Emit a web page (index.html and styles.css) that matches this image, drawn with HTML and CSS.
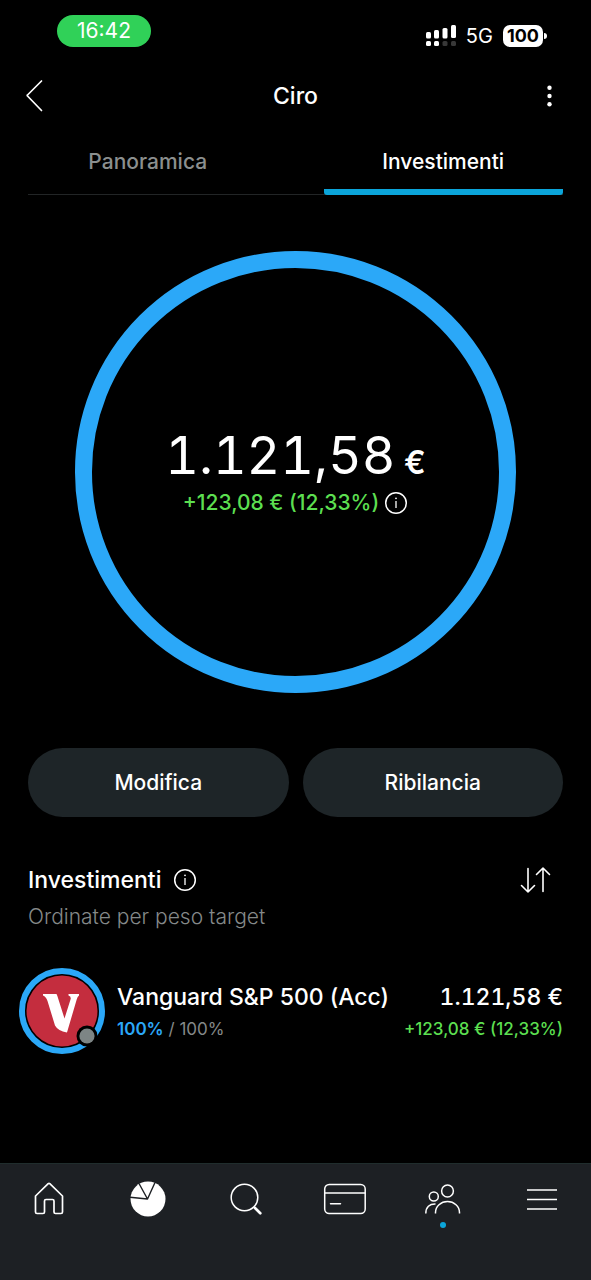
FILE: index.html
```html
<!DOCTYPE html>
<html lang="it">
<head>
<meta charset="utf-8">
<meta name="viewport" content="width=device-width, initial-scale=1">
<title>Ciro</title>
<link rel="stylesheet" href="styles.css">
</head>
<body>
<div class="app">
  <div class="status">
    <span class="status-time">16:42</span>
    <div class="status-right">
      <svg class="signal" width="30" height="22" viewBox="0 0 30 22" aria-hidden="true">
        <g fill="#fff"><rect x="0" y="7" width="5" height="6.500" rx="1.500"/><rect x="8" y="5" width="5" height="8.500" rx="1.500"/><rect x="16.500" y="3" width="5" height="10.500" rx="1.500"/><rect x="25" y="0" width="5" height="13" rx="1.500"/><rect x="0" y="16" width="5" height="5" rx="1.500"/><rect x="8" y="16" width="5" height="5" rx="1.500"/></g>
        <g fill="#383838"><rect x="16.500" y="16" width="5" height="5" rx="1.500"/><rect x="25" y="16" width="5" height="5" rx="1.500"/></g>
      </svg>
      <span class="network">5G</span>
      <span class="battery">100</span>
    </div>
  </div>

  <header class="header">
    <button class="icon-button" type="button" aria-label="Indietro">
      <svg width="18" height="34" viewBox="0 0 18 34" fill="none" stroke="#fff" stroke-width="1.700" stroke-linecap="round" stroke-linejoin="round"><path d="M15.500 2 1.500 16q-.6.500 0 1L15.500 31.500"/></svg>
    </button>
    <h1 class="title">Ciro</h1>
    <button class="icon-button icon-button-end" type="button" aria-label="Altro">
      <svg width="30" height="24" viewBox="0 0 30 24" fill="#fff"><circle cx="14.500" cy="3.700" r="2.200"/><circle cx="14.500" cy="12" r="2.200"/><circle cx="14.500" cy="20.300" r="2.200"/></svg>
    </button>
  </header>

  <nav class="tabs">
    <a class="tab" href="#panoramica">Panoramica</a>
    <a class="tab tab-active" href="#investimenti" aria-current="page">Investimenti</a>
  </nav>

  <main class="main">
    <section class="ring">
      <p class="total">1.121,58<span class="total-currency"> €</span></p>
      <p class="gain">+123,08 € (12,33%)
        <button class="info" type="button" aria-label="Informazioni"><svg width="24" height="24" viewBox="0 0 24 24" fill="none" stroke="#fff" stroke-width="1.500"><circle cx="12" cy="12" r="10.300"/><path d="M12 10v7" stroke-width="1.300"/><circle cx="12" cy="7.300" r=".9" fill="#fff" stroke="none"/></svg></button>
      </p>
    </section>

    <div class="actions">
      <button class="action" type="button">Modifica</button>
      <button class="action" type="button">Ribilancia</button>
    </div>

    <section class="holdings" id="investimenti">
      <div class="holdings-head">
        <h2 class="heading">Investimenti</h2>
        <button class="info" type="button" aria-label="Informazioni"><svg width="24" height="24" viewBox="0 0 24 24" fill="none" stroke="#fff" stroke-width="1.500"><circle cx="12" cy="12" r="10.300"/><path d="M12 10v7" stroke-width="1.300"/><circle cx="12" cy="7.300" r=".9" fill="#fff" stroke="none"/></svg></button>
        <button class="sort" type="button" aria-label="Ordina">
          <svg width="32" height="28" viewBox="0 0 32 28" fill="none" stroke="#fff" stroke-width="1.600" stroke-linecap="round" stroke-linejoin="round"><path d="M9 2.500V26M2.500 19.500 9 26l6.500-6.500M24 25.500V2M17.500 8.500 24 2l6.500 6.500"/></svg>
        </button>
      </div>
      <p class="sorting">Ordinate per peso target</p>

      <article class="holding">
        <svg class="logo" width="86" height="86" viewBox="0 0 86 86" role="img" aria-label="Vanguard">
          <circle cx="43" cy="43" r="40" fill="#000" stroke="#2ba8f8" stroke-width="6"/>
          <circle cx="43" cy="43" r="35.500" fill="#c42d3e"/>
          <path fill="#fff" d="M24 26H37.500Q38.500 28 39 30L45.500 50.500 51.500 31.500Q52.500 28.500 49.500 27.500V26H60V27.500Q58.500 28.500 57.700 31.500L48 64.500Q39 63 36 57.500L28.500 33Q27 28.500 24 27.500Z"/>
          <circle cx="68" cy="68" r="10.500" fill="#000"/><circle cx="68" cy="68" r="7.600" fill="#7d8585"/>
        </svg>
        <div class="holding-info">
          <h3 class="holding-line">Vanguard S&amp;P 500 (Acc)</h3>
          <p class="holding-sub weight"><strong class="weight-now">100%</strong> / 100%</p>
        </div>
        <div class="holding-value">
          <p class="holding-line amount">1.121,58 €</p>
          <p class="holding-sub positive">+123,08 € (12,33%)</p>
        </div>
      </article>
    </section>
  </main>

  <nav class="bottom">
    <a class="bottom-item" href="#home" aria-label="Home">
      <svg width="44" height="36" viewBox="0 0 44 36" fill="none" stroke="#fff" stroke-width="1.700" stroke-linejoin="round"><path d="M8.500 15 21.200 2.700q.8-.7 1.600 0L35.500 15V31q0 1.500-1.500 1.500H28.500q-1.500 0-1.500-1.500V20q0-1.500-1.500-1.500H19q-1.500 0-1.500 1.500V31q0 1.500-1.500 1.500H10q-1.500 0-1.500-1.500Z"/></svg>
    </a>
    <a class="bottom-item" href="#portfolio" aria-label="Portafoglio">
      <svg width="44" height="36" viewBox="0 0 44 36"><circle cx="22" cy="18" r="17.500" fill="#fff"/><path d="M4 16.300 21.500 18 13 2.500M21.500 18 29 1.500" fill="none" stroke="#1d2024" stroke-width="1.400" stroke-linejoin="round"/></svg>
    </a>
    <a class="bottom-item" href="#cerca" aria-label="Cerca">
      <svg width="44" height="36" viewBox="0 0 44 36" fill="none" stroke="#fff" stroke-linecap="round"><circle cx="20.500" cy="16.500" r="13.300" stroke-width="1.500"/><path d="m31 27 5.300 5.300" stroke-width="2.700"/></svg>
    </a>
    <a class="bottom-item" href="#carta" aria-label="Carta">
      <svg width="44" height="36" viewBox="0 0 44 36" fill="none" stroke="#fff" stroke-width="1.500" stroke-linecap="round"><rect x="1.700" y="3.500" width="40.500" height="29" rx="4.500"/><path d="M2 12h40M7.500 22.800H17.500"/></svg>
    </a>
    <a class="bottom-item" href="#persone" aria-label="Persone" aria-current="page">
      <svg width="44" height="36" viewBox="0 0 44 36" fill="none" stroke="#fff" stroke-width="1.500"><circle cx="26.500" cy="10" r="5.900"/><circle cx="12.800" cy="15.500" r="4.500"/><path d="M14.500 32.500V31.500A12 11 0 0 1 38.500 31.500V32.500M4.800 32.500C4.800 26 8.500 22.800 14.500 23"/></svg>
      <span class="bottom-dot"></span>
    </a>
    <a class="bottom-item" href="#menu" aria-label="Menu">
      <svg width="44" height="36" viewBox="0 0 44 36" fill="none" stroke="#fff" stroke-width="1.600"><path d="M7 9h30M7 18.500h30M7 28h30"/></svg>
    </a>
  </nav>
</div>
</body>
</html>
```

FILE: styles.css
```css
* { box-sizing: border-box; }

body {
  margin: 0;
  background: #000;
  color: #fff;
  font-family: Inter, "Liberation Sans", sans-serif;
}

h1, h2, h3, p { margin: 0; font-weight: 500; }

button {
  padding: 0;
  border: 0;
  background: none;
  color: inherit;
  font: inherit;
}

a { color: inherit; text-decoration: none; }
svg { display: block; }

.app {
  min-height: 100vh;
  display: flex;
  flex-direction: column;
}

.status {
  display: flex;
  justify-content: space-between;
  align-items: flex-start;
  padding: 15px 48px 0 57px;
  height: 60px;
}

.status-time {
  padding: 0 20px;
  border-radius: 16px;
  background: #30d158;
  font-size: 21px;
  font-weight: 400;
  line-height: 32px;
}

.status-right {
  display: flex;
  align-items: center;
  gap: 10px;
  padding-top: 7px;
}

.network { font-size: 20px; line-height: 28px; }

.battery {
  position: relative;
  padding: 0 4px;
  border-radius: 7px;
  background: #fff;
  color: #000;
  font-size: 18px;
  font-weight: 700;
  line-height: 22px;
}

.battery::after {
  content: "";
  position: absolute;
  top: 8px;
  right: -4px;
  width: 3px;
  height: 6px;
  border-radius: 0 3px 3px 0;
  background: #fff;
}

.header {
  display: grid;
  grid-template-columns: 1fr auto 1fr;
  align-items: center;
  height: 71px;
  padding: 0 26px;
}

.icon-button { justify-self: start; }
.icon-button-end { justify-self: end; }
.title { font-size: 23px; line-height: 28px; }

.tabs {
  display: grid;
  grid-template-columns: 1fr 1fr;
  gap: 56px;
  margin: 0 28px;
  border-bottom: 1px solid #222526;
}

.tab {
  height: 64px;
  padding-top: 17px;
  margin-bottom: -1px;
  color: #8b8f8f;
  font-size: 21px;
  font-weight: 500;
  line-height: 28px;
  text-align: center;
}

.tab-active {
  color: #fff;
  background: linear-gradient(#0ba5da, #0ba5da) bottom / 100% 6px no-repeat;
  border-radius: 3px;
}

.main { padding: 56px 28px; }

.ring {
  display: flex;
  flex-direction: column;
  align-items: center;
  justify-content: center;
  width: 82.6%;
  aspect-ratio: 1;
  margin: 0 auto 55px;
  padding-top: 4px;
  border: 17px solid #2ba8f8;
  border-radius: 50%;
}

.total {
  font-size: 52px;
  font-weight: 400;
  font-variant-numeric: tabular-nums;
  line-height: 52px;
  white-space: nowrap;
}

.total-currency { font-size: 32px; font-weight: 600; }

.gain {
  display: flex;
  align-items: center;
  gap: 5px;
  color: #5cdf50;
  font-size: 21px;
  line-height: 28px;
}

.actions {
  display: grid;
  grid-template-columns: 1fr 1fr;
  gap: 14px;
}

.action {
  height: 69px;
  border-radius: 35px;
  background: #1e2528;
  font-size: 21px;
  font-weight: 500;
}

.holdings { padding-top: 47px; }

.holdings-head {
  display: flex;
  align-items: center;
  gap: 12px;
}

.heading { font-size: 23px; line-height: 32px; }
.sort { margin: 0 12px 0 auto; }

.sorting {
  padding-top: 7px;
  color: #858989;
  font-size: 21px;
  font-weight: 300;
  line-height: 28px;
}

.holding {
  display: flex;
  align-items: center;
  margin-top: 37px;
}

.logo { flex: none; margin: 0 12px 0 -9px; }
.holding-info { flex: 1; }
.holding-value { text-align: right; }
.holding-line { font-size: 23px; line-height: 32px; white-space: nowrap; }
.holding-sub { font-size: 17px; line-height: 24px; padding-top: 4px; }
.amount { font-variant-numeric: tabular-nums; }
.weight { color: #858989; font-weight: 400; }
.weight-now { color: #2ba8f8; font-weight: 600; }
.positive { color: #5cdf50; }

.bottom {
  display: grid;
  grid-template-columns: repeat(6, 1fr);
  height: 117px;
  margin-top: auto;
  padding-top: 17px;
  border-top: 1px solid #202d2d;
  background: #1d2024;
}

.bottom-item {
  display: flex;
  flex-direction: column;
  align-items: center;
  gap: 5px;
}

.bottom-dot {
  width: 6px;
  height: 6px;
  border-radius: 50%;
  background: #0ba5da;
}
```
